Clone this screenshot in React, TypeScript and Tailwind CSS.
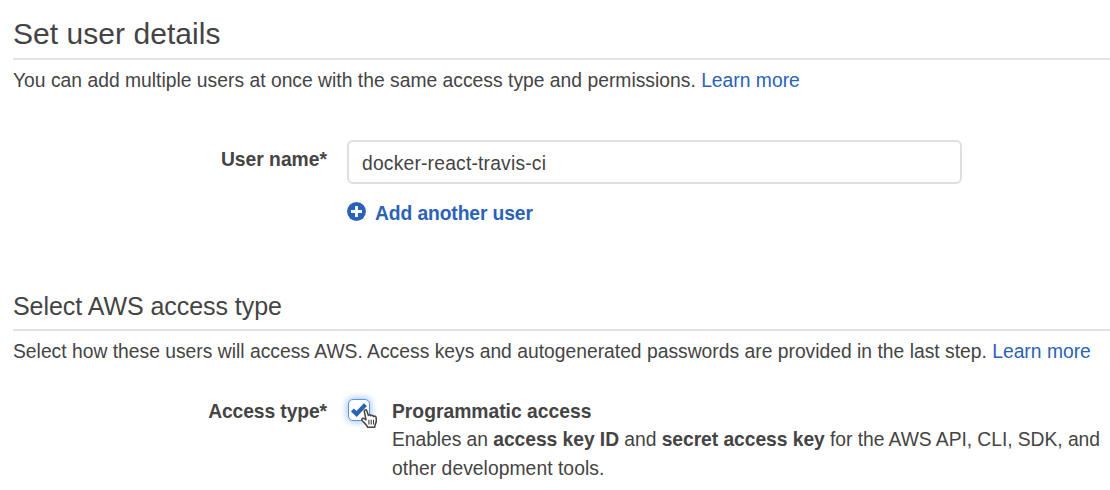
import React from "react";

function LearnMore() {
  return <a className="text-[#2a62b8]">Learn more</a>;
}

function PointerCursor() {
  return (
    <svg className="absolute left-[11px] top-[8px] h-[22px] w-[19px]" viewBox="0 0 19 22" fill="none">
      <path
        d="M4.3 3.2C4 1.9 6.2 1.2 6.8 2.7L8.4 7.4C8.9 6.4 10.7 6.6 10.9 7.8C11.5 7 13.1 7.2 13.4 8.5C14.3 7.7 16 8.3 16.2 9.8C16.6 12.2 16.4 14.5 15.2 16.8L14.6 19.3H7.6C7.2 17 4 14.9 2 12.4C1 10.9 2.8 9.6 4.2 10.7L6 11.8Z"
        fill="#fff"
        stroke="#444"
        strokeWidth="1.5"
        strokeLinejoin="round"
      />
      <path d="M8.9 11.8V16.4M11.2 11.8V16.4M13.5 11.8V16.4" stroke="#444" strokeWidth="1.1" />
    </svg>
  );
}

export default function App() {
  return (
    <main className="h-[490px] w-full overflow-hidden bg-white pl-[13px] font-['Liberation_Sans',Arial,sans-serif] text-[19.3px] leading-7 text-[#444]">
      <section className="h-[272px]">
        <h1 className="h-[60px] border-b-2 border-[#e3e3e3] pt-[14px] text-[30px] leading-10 tracking-[0.05px]">Set user details</h1>
        <p className="whitespace-nowrap pt-[7px] tracking-[0.01px]">
          You can add multiple users at once with the same access type and permissions. <LearnMore />
        </p>
        <div className="flex pt-[45px]">
          <label className="w-[314px] pt-1.5 text-right font-bold">User name*</label>
          <div className="ml-5">
            <div className="flex h-11 w-[615px] items-center rounded-[6px] border-2 border-[#dfdfdf] px-[13px] pt-[3px] tracking-[0.19px]">
              docker-react-travis-ci
            </div>
            <button className="mt-4 flex items-center font-bold tracking-[-0.11px] text-[#2a62b8]">
              <svg className="-mt-[5px] mr-[9px] h-[19px] w-[19px]" viewBox="0 0 19 19">
                <circle cx="9.5" cy="9.5" r="9.4" fill="#2a62b8" />
                <path d="M9.5 4V15M4 9.5H15" stroke="#fff" strokeWidth="2.8" />
              </svg>
              Add another user
            </button>
          </div>
        </div>
      </section>
      <section>
        <h2 className="h-[59px] border-b-2 border-[#e3e3e3] pt-[18px] text-[25px] leading-8 tracking-[-0.05px]">Select AWS access type</h2>
        <p className="whitespace-nowrap pt-[7px] tracking-[0.003px]">
          Select how these users will access AWS. Access keys and autogenerated passwords are provided in the last step. <LearnMore />
        </p>
        <div className="flex pt-8">
          <span className="w-[314px] text-right font-bold tracking-[-0.1px]">Access type*</span>
          <span className="relative ml-[21px] mt-px h-[22px] w-[22px] shrink-0 rounded-[5px] border-[1.5px] border-[#5f94dc] bg-white shadow-[0_0_7px_1px_#9cc4f5]">
            <svg className="h-full w-full" viewBox="0 0 20 20">
              <path d="M3.4 10L7.6 14L16.4 4.6" fill="none" stroke="#2a62b8" strokeWidth="4.2" />
            </svg>
            <PointerCursor />
          </span>
          <div className="ml-[22px] whitespace-nowrap leading-[28px]">
            <div className="font-bold">Programmatic access</div>
            <div className="tracking-[-0.055px]">
              Enables an <b>access key ID</b> and <b>secret access key</b> for the AWS API, CLI, SDK, and
            </div>
            <div className="pt-px tracking-[0.05px]">other development tools.</div>
          </div>
        </div>
      </section>
    </main>
  );
}
